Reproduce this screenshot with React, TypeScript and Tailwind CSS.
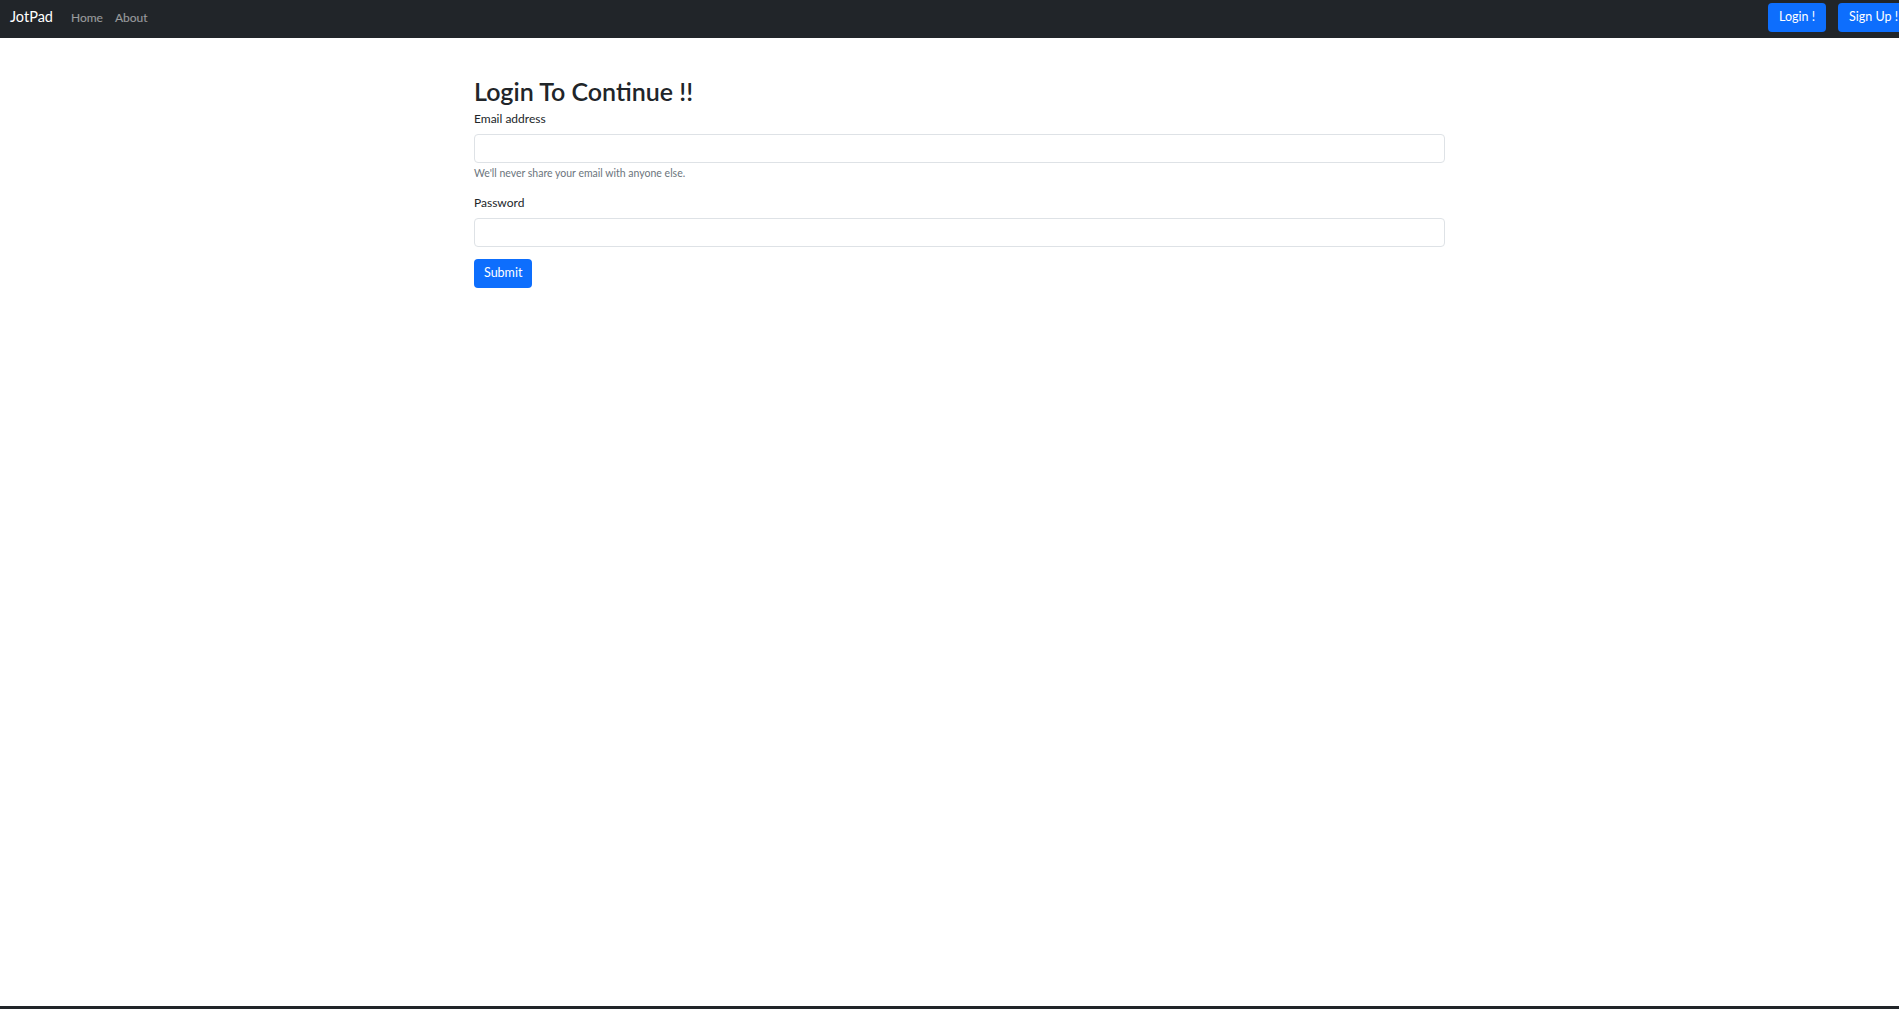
export default function App() {
  return (
    <div className="flex h-[1009px] flex-col overflow-hidden bg-white font-['Lato',sans-serif] text-[12px] text-[#212529]">
      {/* navbar */}
      <nav className="flex h-[38px] shrink-0 items-start bg-[#212529] pl-[10px] pt-[3px]">
        <div className="flex h-[29px] items-center">
          <span className="mr-[12px] text-[14.5px] leading-none text-white">JotPad</span>
          <a className="px-[6px] text-[12px] text-white/55">Home</a>
          <a className="px-[6px] text-[12px] text-white/55">About</a>
        </div>
        <div className="ml-auto flex h-[29px] gap-[12px] overflow-visible">
          <button className="h-[29px] rounded-[4px] bg-[#0d6efd] px-[11px] text-[12.5px] whitespace-nowrap text-white">
            Login !
          </button>
          <button className="-mr-[10px] h-[29px] rounded-[4px] bg-[#0d6efd] px-[11px] text-[12.5px] whitespace-nowrap text-white">
            Sign Up !
          </button>
        </div>
      </nav>

      <main className="flex-1 pt-[39px]">
        <div className="ml-[474px] w-[971px]">
          <h2 className="mb-[4px] text-[25px] leading-[29px] font-semibold">Login To Continue !!</h2>
          <form onSubmit={(e) => e.preventDefault()}>
            <div className="mb-[12px]">
              <label className="mb-[6px] block leading-[18px]">Email address</label>
              <input
                type="email"
                className="block h-[29px] w-full rounded-[4px] border border-[#dee2e6] px-[9px] outline-none"
              />
              <div className="mt-[3px] text-[10.5px] leading-[15.75px] text-[#6c757d]">
                We'll never share your email with anyone else.
              </div>
            </div>
            <div className="mb-[12px]">
              <label className="mb-[6px] block leading-[18px]">Password</label>
              <input
                type="password"
                className="block h-[29px] w-full rounded-[4px] border border-[#dee2e6] px-[9px] outline-none"
              />
            </div>
            <button
              type="submit"
              className="h-[29px] rounded-[4px] bg-[#0d6efd] px-[10px] text-[12.5px] text-white"
            >
              Submit
            </button>
          </form>
        </div>
      </main>

      <div className="h-[3px] shrink-0 bg-[#212529]" />
    </div>
  );
}
